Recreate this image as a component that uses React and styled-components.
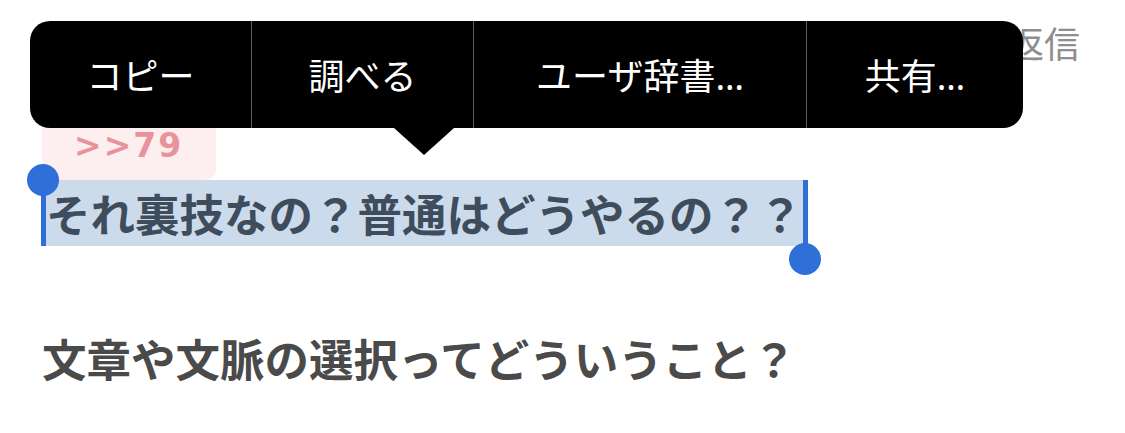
import React from 'react';
import styled, { createGlobalStyle } from 'styled-components';

const GlobalStyle = createGlobalStyle`
  html, body {
    margin: 0;
    padding: 0;
    background: #ffffff;
  }
  body {
    font-family: "Noto Sans CJK JP", "Noto Sans", sans-serif;
  }
`;

const Page = styled.div`
  position: relative;
  width: 1125px;
  height: 433px;
  overflow: hidden;
  background: #ffffff;
`;

const Header = styled.div`
  height: 112px;
  display: flex;
  justify-content: flex-end;
  align-items: flex-start;
  padding-right: 45px;
  box-sizing: border-box;
`;

const ReplyLink = styled.span`
  margin-top: 16px;
  font-size: 36px;
  line-height: 52px;
  color: #8e8e8e;
`;

const Quote = styled.div`
  margin-left: 42px;
  width: 174px;
  height: 68px;
  box-sizing: border-box;
  padding: 16px 0 0 32px;
  background: #fdeeef;
  border-radius: 0 0 10px 10px;
  font-family: "DejaVu Sans", Verdana, sans-serif;
  font-weight: 700;
  font-size: 33px;
  letter-spacing: 2px;
  line-height: 36px;
  color: #e8939b;
`;

const Line = styled.div`
  margin-left: ${({ indent }) => indent}px;
  margin-top: ${({ gap }) => gap}px;
  font-size: 44.5px;
  font-weight: 700;
  line-height: 66px;
  height: 66px;
  white-space: nowrap;
  color: ${({ tone }) => tone};
`;

const Selection = styled.span`
  position: relative;
  display: inline-block;
  height: 66px;
  background: #cbdbeb;
`;

const Handle = styled.span`
  position: absolute;
  top: 0;
  width: 5px;
  height: ${({ end }) => (end ? 79 : 66)}px;
  background: #2f6fd8;
  ${({ end }) => (end ? 'right: -5px;' : 'left: -5px;')}

  &::after {
    content: '';
    position: absolute;
    left: -14px;
    width: 32px;
    height: 32px;
    border-radius: 50%;
    background: #2f6fd8;
    ${({ end }) => (end ? 'bottom: -16px;' : 'top: -16px;')}
  }
`;

const Menu = styled.div`
  position: absolute;
  left: 30px;
  top: 21px;
  height: 107px;
  display: flex;
  background: #000000;
  border-radius: 20px;
`;

const MenuItem = styled.div`
  width: ${({ w }) => w}px;
  display: flex;
  align-items: center;
  justify-content: center;
  box-sizing: border-box;
  border-left: ${({ first }) => (first ? 'none' : '1px solid #5c5c5c')};
  color: #ffffff;
  font-family: "Noto Sans", "Noto Sans CJK JP", sans-serif;
  font-size: 36px;
  font-weight: 400;
  white-space: nowrap;
`;

const Pointer = styled.div`
  position: absolute;
  left: 364px;
  top: 100%;
  width: 0;
  height: 0;
  border-left: 30px solid transparent;
  border-right: 30px solid transparent;
  border-top: 27px solid #000000;
`;

const items = [
  { label: 'コピー', w: 221 },
  { label: '調べる', w: 222 },
  { label: 'ユーザ辞書…', w: 333 },
  { label: '共有…', w: 217 },
];

export default function App() {
  return (
    <Page>
      <GlobalStyle />
      <Header>
        <ReplyLink>返信</ReplyLink>
      </Header>
      <Quote>&gt;&gt;79</Quote>
      <Line indent={46} gap={0} tone="#3e4c5b">
        <Selection>
          <Handle />
          それ裏技なの？普通はどうやるの？？
          <Handle end />
        </Selection>
      </Line>
      <Line indent={42} gap={79} tone="#4a4a4a">
        文章や文脈の選択ってどういうこと？
      </Line>
      <Menu>
        {items.map((it, i) => (
          <MenuItem key={it.label} w={it.w} first={i === 0}>
            {it.label}
          </MenuItem>
        ))}
        <Pointer />
      </Menu>
    </Page>
  );
}
